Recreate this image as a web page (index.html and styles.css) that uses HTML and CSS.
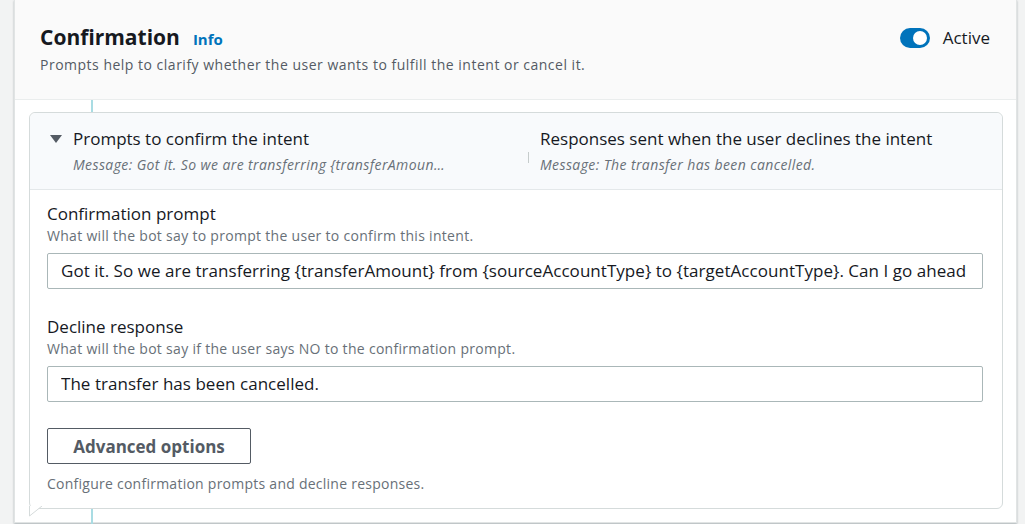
FILE: index.html
```html
<!DOCTYPE html>
<html lang="en">
<head>
<meta charset="utf-8">
<link rel="stylesheet" href="styles.css">
</head>
<body>
<div class="panel">
  <div class="panel-header">
    <div class="head-text">
      <div class="title-row"><h2 class="title">Confirmation</h2><a class="info">Info</a></div>
      <p class="desc">Prompts help to clarify whether the user wants to fulfill the intent or cancel it.</p>
    </div>
    <div class="toggle-wrap">
      <span class="toggle"><span class="knob"></span></span>
      <span class="toggle-label">Active</span>
    </div>
  </div>
  <div class="panel-body">
    <div class="card">
      <div class="card-head">
        <div class="col col-left">
          <div class="col-title"><span class="caret"></span>Prompts to confirm the intent</div>
          <div class="col-sub">Message: Got it. So we are transferring {transferAmount} from {sourceAccountType} to {targetAccountType}. Can I go ahead with the transfer?</div>
        </div>
        <span class="divider"></span>
        <div class="col col-right">
          <div class="col-title">Responses sent when the user declines the intent</div>
          <div class="col-sub">Message: The transfer has been cancelled.</div>
        </div>
      </div>
      <div class="card-body">
        <div class="field">
          <label class="label">Confirmation prompt</label>
          <div class="help">What will the bot say to prompt the user to confirm this intent.</div>
          <div class="input"><div class="input-text">Got it. So we are transferring {transferAmount} from {sourceAccountType} to {targetAccountType}. Can I go ahead with the transfer?</div></div>
        </div>
        <div class="field">
          <label class="label">Decline response</label>
          <div class="help">What will the bot say if the user says NO to the confirmation prompt.</div>
          <div class="input"><div class="input-text">The transfer has been cancelled.</div></div>
        </div>
        <button class="btn">Advanced options</button>
        <div class="help foot">Configure confirmation prompts and decline responses.</div>
      </div>
      <svg class="tail" width="16" height="12" viewBox="0 0 16 12"><polygon points="0,0 0,10 13,0" fill="#fff"/><polyline points="0.5,0 0.5,10 13,0" fill="none" stroke="#d5dbdb" stroke-width="1"/></svg>
    </div>
  </div>
</div>
</body>
</html>
```
FILE: styles.css
```css
* { box-sizing: border-box; }
html, body { margin: 0; padding: 0; }
body {
  background: #f2f3f3;
  font-family: "Open Sans", "Noto Sans", sans-serif;
  color: #16191f;
  width: 1025px;
  height: 524px;
  overflow: hidden;
}
.panel {
  margin-left: 14px;
  width: 1003px;
  height: 523px;
  background: #fff;
  border: 1px solid #e1e4e4;
  border-top: 0;
  box-shadow: 0 1px 2px rgba(0,28,36,0.3);
}
.panel-header {
  background: #fafafa;
  height: 100px;
  border-bottom: 1px solid #eaeded;
  display: flex;
  justify-content: space-between;
  align-items: flex-start;
  padding: 22px 26px 0 25px;
}
.title-row { display: flex; align-items: baseline; }
.title {
  margin: 0;
  font-size: 21px;
  font-weight: 700;
  line-height: 30px;
}
.info {
  margin-left: 13px;
  font-size: 15px;
  font-weight: 700;
  color: #0073bb;
}
.desc {
  margin: 3px 0 0;
  font-size: 14px;
  line-height: 20px;
  letter-spacing: 0.5px;
  color: #545b64;
}
.toggle-wrap { display: flex; align-items: center; margin-top: 5px; }
.toggle {
  width: 30px;
  height: 20px;
  border-radius: 10px;
  background: #0073bb;
  position: relative;
  display: inline-block;
}
.knob {
  position: absolute;
  right: 3px;
  top: 3px;
  width: 14px;
  height: 14px;
  border-radius: 50%;
  background: #fff;
}
.toggle-label { margin-left: 13px; font-size: 17px; line-height: 22px; }
.panel-body {
  position: relative;
  padding: 12px 13px 13px 14px;
}
.panel-body::before {
  content: "";
  position: absolute;
  left: 76px;
  top: 0;
  bottom: -2px;
  width: 2px;
  background: #a9dce3;
}
.card {
  position: relative;
  z-index: 1;
  height: 397px;
  border: 1px solid #d5dbdb;
  border-radius: 6px;
  background: #fff;
}
.card-head {
  display: flex;
  align-items: center;
  background: #f8fafc;
  border-bottom: 1px solid #e4e8ea;
  border-radius: 6px 6px 0 0;
  height: 77px;
  padding: 0 20px 1px 20px;
}
.col { min-width: 0; }
.col-left { width: 478px; }
.col-right { flex: 1; padding-left: 11px; }
.col-title {
  font-size: 17px;
  line-height: 22px;
  white-space: nowrap;
  display: flex;
  align-items: center;
}
.caret {
  width: 0; height: 0;
  border-left: 6px solid transparent;
  border-right: 6px solid transparent;
  border-top: 8px solid #545b64;
  margin-right: 11px;
  margin-top: 1px;
}
.col-sub {
  margin-top: 6px;
  font-size: 14px;
  line-height: 18px;
  letter-spacing: 0.4px;
  font-style: italic;
  color: #687078;
  white-space: nowrap;
  overflow: hidden;
  text-overflow: ellipsis;
}
.col-left .col-sub { margin-left: 23px; width: 374px; }
.divider {
  width: 1px;
  height: 11px;
  background: #c6cccc;
  margin-top: 13px;
}
.card-body { padding: 13px 19px 0 17px; }
.field { margin-bottom: 27px; }
.field + .field { margin-bottom: 26px; }
.label { display: block; font-size: 17px; line-height: 22px; }
.help {
  font-size: 14px;
  line-height: 18px;
  letter-spacing: 0.3px;
  color: #687078;
  margin-top: 2px;
}
.input {
  margin-top: 8px;
  height: 36px;
  border: 1px solid #aab7b8;
  border-radius: 2px;
  padding: 0 13px;
}
.input-text {
  font-size: 17px;
  line-height: 34px;
  letter-spacing: 0.04px;
  white-space: nowrap;
  overflow: hidden;
}
.btn {
  display: block;
  width: 204px;
  height: 36px;
  border: 1px solid #545b64;
  border-radius: 2px;
  background: #fff;
  font-family: inherit;
  font-size: 17px;
  font-weight: 700;
  color: #545b64;
  padding: 0;
}
.help.foot { margin-top: 11px; letter-spacing: 0.25px; }
.tail {
  position: absolute;
  left: -1px;
  bottom: -10px;
}
```
